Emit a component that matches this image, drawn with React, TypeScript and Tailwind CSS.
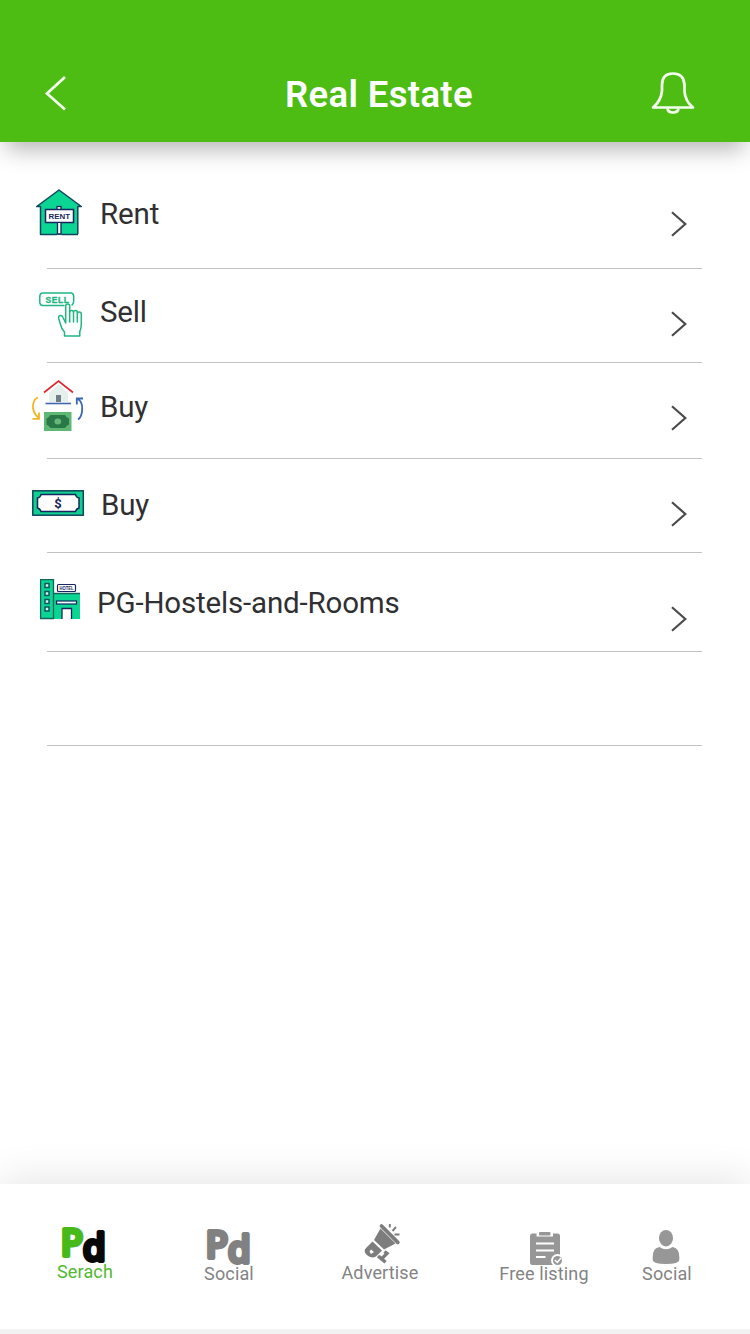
import type { ReactNode } from "react";

const sans = "font-['Roboto','Liberation_Sans',sans-serif]";

function RentIcon() {
  return (
    <svg width="56" height="60" viewBox="30 180 56 60">
      <path d="M59 190 81.500 207H78V235H40V207H36.500Z" fill="#0bd592" />
      <path d="M77.800 234V206.500H81.300L59 190 36.700 206.500H40.500V234.500H57M61.500 234.500H78" fill="none" stroke="#12445f" strokeWidth="1.500" strokeLinejoin="round" />
      <rect x="57" y="206.500" width="4" height="4" fill="#fff" stroke="#17265e" strokeWidth="1.300" />
      <rect x="45.500" y="209.500" width="28" height="13" fill="#fff" stroke="#17265e" strokeWidth="1.500" />
      <text x="48.500" y="219" fontSize="7.600" fontWeight="700" textLength="21.500" lengthAdjust="spacingAndGlyphs" fill="#17265e" className="font-['Liberation_Sans',sans-serif]">RENT</text>
      <path d="M57.500 223V234H61V223" fill="#fff" stroke="#17265e" strokeWidth="1.300" />
    </svg>
  );
}

function SellIcon() {
  return (
    <svg width="56" height="60" viewBox="30 280 56 60" fill="none" stroke="#1fb681" strokeWidth="1.500" strokeLinejoin="round" strokeLinecap="round">
      <path d="M64 305.500H43Q39.800 305.500 39.800 302V296.500Q39.800 293 43 293H70.500Q73.700 293 73.700 296.500V301Q73.700 303.500 72 305" />
      <text x="45.500" y="302.500" fontSize="8.500" fontWeight="700" textLength="23.500" fill="#1fb681" stroke="#1fb681" strokeWidth="0.300" className="font-['Liberation_Sans',sans-serif]">SELL</text>
      <path d="M65.700 323V306A2 2 0 0 1 69.700 306V322M69.700 312.500A1.900 1.900 0 0 1 73.500 312.500V322M73.500 312.500A1.900 1.900 0 0 1 77.300 312.500V322M77.300 314A2 2 0 0 1 81.300 314V324Q81.300 328 79.800 331.500V336H64.500V332Q61.500 329 60.500 324.500L58.700 318.500Q58.200 315.800 60.300 315.500Q62 315.300 63 317.500L65.700 323" />
    </svg>
  );
}

function HouseSwapIcon() {
  return (
    <svg width="56" height="60" viewBox="30 375 56 60">
      <path d="M49 393 58.500 384 68 393V402H49Z" fill="#e6efec" />
      <path d="M56 402V395H61V402" fill="#6e7e86" />
      <path d="M44 392.500 58.500 381 73 392.500" fill="none" stroke="#dc2931" strokeWidth="1.700" />
      <path d="M45.500 403.500H71" stroke="#4265b2" strokeWidth="1.600" />
      <rect x="44" y="412" width="27.500" height="19" fill="#5eb773" />
      <path d="M50.500 415H65Q66 417.500 69 418.500V424.500Q66 425.500 65 428H50.500Q49 425.500 46.500 424.500V418.500Q49 417.500 50.500 415Z" fill="#2a7748" />
      <ellipse cx="57.800" cy="421.500" rx="3.400" ry="3" fill="#67b578" />
      <path d="M38 397.500Q33.500 399 33 405.500T38 417.500M32.500 418.800H39V412.500" fill="none" stroke="#efb523" strokeWidth="1.800" />
      <path d="M78 419.500Q82 417 82.200 409T77.500 399M76.800 404.500V398.500H83" fill="none" stroke="#3768b4" strokeWidth="1.800" />
    </svg>
  );
}

function CashIcon() {
  return (
    <svg width="56" height="30" viewBox="30 488 56 30">
      <rect x="32.800" y="490.800" width="50.500" height="24.400" fill="#10cf91" stroke="#10465b" strokeWidth="1.500" />
      <path d="M41 494.500H75.500Q76 497.500 79 498V508Q76 509 75.500 511.500H41Q40.500 509 37.500 508V498Q40.500 497.500 41 494.500Z" fill="#fff" stroke="#17265e" strokeWidth="1.500" />
      <text x="58" y="507.500" textAnchor="middle" fontSize="13" fontWeight="700" fill="#17265e" className="font-['Roboto',sans-serif]">$</text>
    </svg>
  );
}

function HotelIcon() {
  return (
    <svg width="56" height="60" viewBox="30 570 56 60">
      <rect x="40" y="579" width="14" height="40" fill="#0bd592" />
      <rect x="54" y="593" width="26" height="26" fill="#0bd592" />
      <path d="M40.600 619V579.700H53.500V619M54 593.500H80M40 618.500H54" fill="none" stroke="#14635f" strokeWidth="1.300" />
      <path d="M45 583.500H49V587.500H45ZM45 591.500H49V595.500H45ZM45 599.500H49V603.500H45ZM45 607H49V611H45Z" fill="#cdfbea" stroke="#135363" strokeWidth="1.500" />
      <path d="M60 592V590M73 592V590" stroke="#17265e" strokeWidth="2" />
      <rect x="57.500" y="584.500" width="18" height="7" rx="1" fill="#fff" stroke="#17265e" strokeWidth="1.200" />
      <text x="59.500" y="590" fontSize="5.200" fontWeight="700" textLength="14" lengthAdjust="spacingAndGlyphs" fill="#17265e" className="font-['Liberation_Sans',sans-serif]">HOTEL</text>
      <rect x="56.500" y="601" width="20" height="3" fill="#e1fff5" stroke="#17265e" strokeWidth="1.200" />
      <path d="M62 619V608.500H71.500V619" fill="#fff" stroke="#17265e" strokeWidth="1.300" />
    </svg>
  );
}

function Chevron() {
  return (
    <svg width="18" height="26" viewBox="0 0 18 26" fill="none" stroke="#4b4b4d" strokeWidth="2.200">
      <path d="M1 1.200 14.300 13 1 24.800" />
    </svg>
  );
}

type Row = {
  label?: string;
  icon?: ReactNode;
  height: string;
  iconTop: string;
  labelPos: string;
  chevronTop: string;
};

const rows: Row[] = [
  { label: "Rent", icon: <RentIcon />, height: "h-[127px]", iconTop: "mt-[38px]", labelPos: "mt-[54px] ml-[14px]", chevronTop: "mt-[69px]" },
  { label: "Sell", icon: <SellIcon />, height: "h-[94px]", iconTop: "mt-[11px]", labelPos: "mt-[25px] ml-[14px]", chevronTop: "mt-[42px]" },
  { label: "Buy", icon: <HouseSwapIcon />, height: "h-[96px]", iconTop: "mt-[12px]", labelPos: "mt-[26px] ml-[14px]", chevronTop: "mt-[42px]" },
  { label: "Buy", icon: <CashIcon />, height: "h-[94px]", iconTop: "mt-[29px]", labelPos: "mt-[28px] ml-[15px]", chevronTop: "mt-[42px]" },
  { label: "PG-Hostels-and-Rooms", icon: <HotelIcon />, height: "h-[99px]", iconTop: "mt-[17px]", labelPos: "mt-[32px] ml-[11px]", chevronTop: "mt-[53px]" },
  { height: "h-[94px]", iconTop: "", labelPos: "", chevronTop: "" },
];

function ListRow({ row }: { row: Row }) {
  return (
    <li className={`flex flex-col ${row.height}`}>
      <div className="flex min-h-0 flex-1 items-start pl-[30px]">
        {row.label && (
          <>
            <span className={row.iconTop}>{row.icon}</span>
            <span className={`text-[29.500px] leading-9 tracking-[-0.160px] whitespace-nowrap text-[#303032] ${row.labelPos}`}>{row.label}</span>
            <span className={`mr-[61px] ml-auto ${row.chevronTop}`}><Chevron /></span>
          </>
        )}
      </div>
      <div className="mr-12 ml-[47px] h-px shrink-0 bg-[#c2c2c4]" />
    </li>
  );
}

function PdLogo({ first, second }: { first: string; second: string }) {
  return (
    <svg width="50" height="42" viewBox="0 0 50 42" strokeWidth="3.800" strokeLinejoin="round" className="overflow-visible font-['Open_Sans','Noto_Sans',sans-serif]">
      <text y="31" fontSize="37" fontWeight="600">
        <tspan x="0.600" fill={first} stroke={first}>P</tspan>
        <tspan x="22.700" y="35.500" fill={second} stroke={second}>d</tspan>
      </text>
    </svg>
  );
}

function MegaphoneIcon() {
  return (
    <svg width="40" height="42" viewBox="362 1222 40 42" fill="#7d7d7d">
      <path d="M381.500 1226 397.800 1242.300" stroke="#7d7d7d" strokeWidth="3.800" strokeLinecap="round" />
      <path d="M380.500 1228.500 395.500 1243.500 384 1249.500 374 1240Z" />
      <path d="M372.500 1241.500 382 1250.500 376 1256.500Q371 1259 366.800 1255T366.500 1247.500Z" />
      <path d="M371 1249.500 374 1252 371 1254 369.500 1251.500Z" fill="#fff" />
      <path d="M378 1256 381.500 1259 387 1253.500 384.500 1251.500M379 1256.500 385.500 1262.300" fill="none" stroke="#7d7d7d" strokeWidth="3.400" />
      <path d="M389.800 1224V1227.500M396 1227 392.500 1231M394.500 1234.500H399.500" stroke="#7d7d7d" strokeWidth="1.900" />
    </svg>
  );
}

function ClipboardIcon() {
  return (
    <svg width="36" height="36" viewBox="528 1230 36 36">
      <path d="M532 1233.500H536.500V1236.500H553V1233.500H557.500Q560 1233.500 560 1236V1265H532.500Q530 1265 530 1262.500V1236Q530 1233.500 532 1233.500Z" fill="#979797" />
      <rect x="539" y="1232" width="11.500" height="3.500" rx="1" fill="#979797" />
      <path d="M536 1243.500H554M536 1250.500H554M536 1257H545.500" stroke="#fff" strokeWidth="2.200" />
      <circle cx="557.500" cy="1260.500" r="6.500" fill="#fff" />
      <circle cx="557.500" cy="1260.500" r="4.500" fill="#979797" />
      <path d="M554.800 1260 557.300 1262.500 561 1258" fill="none" stroke="#fff" strokeWidth="1.500" />
    </svg>
  );
}

function PersonIcon() {
  return (
    <svg width="30" height="38" viewBox="651 1228 30 38" fill="#979797">
      <ellipse cx="666" cy="1238.200" rx="7" ry="8.300" />
      <path d="M659.500 1247Q666 1251.500 672.500 1247Q679.300 1248 679.300 1257V1260Q679 1264 666 1264T652.700 1260V1257Q652.700 1248 659.500 1247Z" />
    </svg>
  );
}

type Tab = { label: string; icon: ReactNode; box: string; iconShift: string; text: string };

const tabs: Tab[] = [
  { label: "Serach", icon: <PdLogo first="#48b91b" second="#080808" />, box: "ml-[45px] w-20 pt-[41px]", iconShift: "", text: "-mt-[7px] text-[#52b930]" },
  { label: "Social", icon: <PdLogo first="#818181" second="#818181" />, box: "ml-[64px] w-20 pt-[43px]", iconShift: "pl-[2px]", text: "-mt-[7px] text-[#838383]" },
  { label: "Advertise", icon: <MegaphoneIcon />, box: "ml-[66px] w-[90px] pt-[38px]", iconShift: "pl-[4px]", text: "-mt-[3px] text-[#838383]" },
  { label: "Free listing", icon: <ClipboardIcon />, box: "ml-[69px] w-[100px] pt-[46px]", iconShift: "pl-[4px]", text: "-mt-[4px] text-[#838383]" },
  { label: "Social", icon: <PersonIcon />, box: "ml-[33px] w-20 pt-[44px]", iconShift: "pr-[2px]", text: "-mt-[4px] text-[#838383]" },
];

export default function App() {
  return (
    <div className={`flex h-[1334px] w-[750px] flex-col overflow-hidden bg-white ${sans}`}>
      <header className="z-10 flex h-[142px] shrink-0 items-start justify-between bg-[#4dbd14] pr-[54px] pl-[44px] shadow-[0_13px_22px_-6px_rgba(0,0,0,0.3)]">
        <button aria-label="Back" className="mt-[74px]">
          <svg width="24" height="38" viewBox="44 74 24 38" fill="none" stroke="#f4ffef" strokeWidth="2.700">
            <path d="M65 77 47 93.500 65 109.500" />
          </svg>
        </button>
        <h1 className="mt-[73px] ml-[40px] text-[36.500px] leading-[44px] font-semibold tracking-[0.350px] whitespace-nowrap text-white">Real Estate</h1>
        <button aria-label="Notifications" className="mt-[70px]">
          <svg width="46" height="46" viewBox="650 70 46 46" fill="none" stroke="#f4ffef" strokeWidth="2.700" strokeLinejoin="round">
            <path d="M653 107.500H693Q685 101 684.500 91V85Q684 73.500 673 73.500T662 85V91Q661 101 653 107.500Z" />
            <path d="M667.500 108.500Q668 112.500 673 112.500T678.500 108.500" />
          </svg>
        </button>
      </header>
      <main className="flex-1">
        <ul>
          {rows.map((row, i) => <ListRow key={i} row={row} />)}
        </ul>
      </main>
      <nav className="z-10 flex h-[145px] shrink-0 items-start bg-white shadow-[0_-8px_36px_rgba(0,0,0,0.09)]">
        {tabs.map((tab, i) => (
          <a key={i} className={`flex shrink-0 flex-col items-center ${tab.box}`}>
            <span className={`flex ${tab.iconShift}`}>{tab.icon}</span>
            <span className={`text-[18px] leading-6 tracking-[0.150px] whitespace-nowrap ${tab.text}`}>{tab.label}</span>
          </a>
        ))}
      </nav>
      <div className="z-20 h-[5px] shrink-0 bg-[#f2f2f2]" />
    </div>
  );
}
